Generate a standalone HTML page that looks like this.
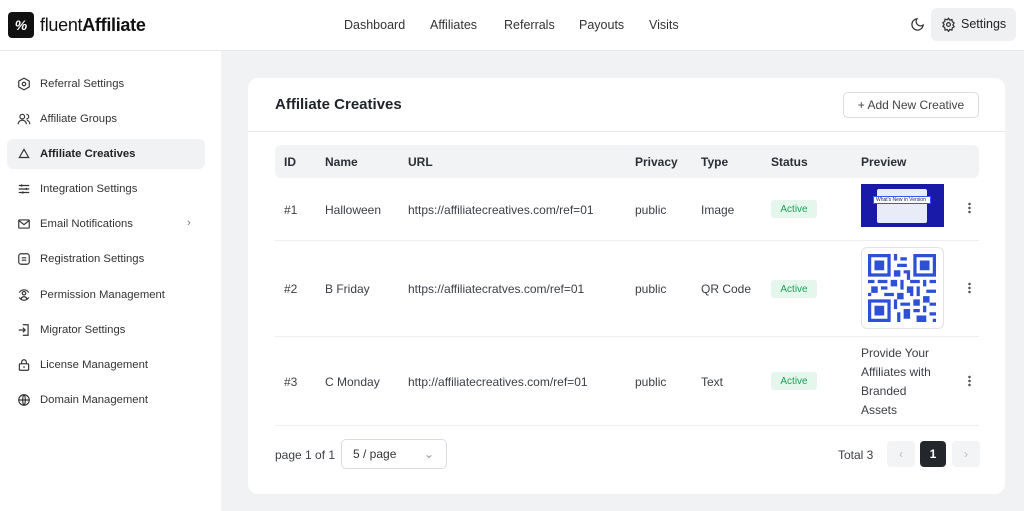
<!DOCTYPE html>
<html><head><meta charset="utf-8"><style>
*{box-sizing:border-box;margin:0;padding:0}
body{width:1024px;height:511px;overflow:hidden;font-family:"Liberation Sans",sans-serif;background:#f1f2f4;color:#2b2f36;font-size:12px;position:relative}
.hdr{position:absolute;left:0;top:0;width:1024px;height:51px;background:#fff;border-bottom:1px solid #e8e9ec}
.logo{position:absolute;left:8px;top:12px;width:26px;height:26px;background:#111;border-radius:4px;color:#fff;font-weight:bold;font-size:14px;text-align:center;line-height:26px;font-style:italic}
.brand{position:absolute;left:40px;top:15px;font-size:18px;color:#111;letter-spacing:-.3px}
.nav{position:absolute;top:18px;font-size:12.5px;color:#333}
.set{position:absolute;left:931px;top:8px;width:85px;height:33px;background:#eef0f2;border-radius:6px;font-size:12.5px;line-height:33px;padding-left:30px;color:#222}
.side{position:absolute;left:0;top:51px;width:221px;height:460px;background:#fff}
.si{position:absolute;left:40px;font-size:11.3px;color:#333;margin-top:1px}
.ic{position:absolute;left:17px;width:14px;height:14px}
.act{position:absolute;left:7px;top:139px;width:198px;height:30px;background:#f1f2f4;border-radius:6px}
.card{position:absolute;left:248px;top:78px;width:757px;height:416px;background:#fff;border-radius:10px}
.t{position:absolute;font-size:12px;color:#3a3e45}
.h{font-weight:bold;color:#2b2f36}
.th{position:absolute;left:275px;top:145px;width:704px;height:33px;background:#f2f3f5;border-radius:6px}
.line{position:absolute;left:275px;width:704px;height:1px;background:#eceef1}
.badge{position:absolute;left:771px;width:46px;height:18px;background:#e5f6ec;color:#1f9d55;font-size:10px;display:flex;align-items:center;justify-content:center;border-radius:3px}
.dots{position:absolute;left:968px;width:3px;height:12px;background:radial-gradient(circle,#555 1.2px,transparent 1.4px) 0 0/3px 4px}
</style></head><body>
<div class="hdr">
<div class="logo">%</div><div class="brand">fluent<b>Affiliate</b></div>
<div class="nav" style="left:344px">Dashboard</div>
<div class="nav" style="left:430px">Affiliates</div>
<div class="nav" style="left:504px">Referrals</div>
<div class="nav" style="left:579px">Payouts</div>
<div class="nav" style="left:649px">Visits</div>
<svg style="position:absolute;left:910px;top:17px" width="15" height="15" viewBox="0 0 24 24" fill="none" stroke="#333" stroke-width="2"><path d="M21 12.8A9 9 0 1 1 11.2 3a7 7 0 0 0 9.8 9.8z"/></svg>
<div class="set">Settings</div>
<svg style="position:absolute;left:941px;top:17px" width="15" height="15" viewBox="0 0 24 24" fill="none" stroke="#333" stroke-width="2"><circle cx="12" cy="12" r="3"/><path d="M12 2l2 3 3.5-1 .5 3.5 3 2-2 3 2 3-3 2-.5 3.5-3.5-1-2 3-2-3-3.5 1L6 17l-3-2 2-3-2-3 3-2 .5-3.5 3.5 1z"/></svg>
</div>
<div class="side"></div>
<div class="act"></div>
<svg class="ic" style="top:77px" viewBox="0 0 24 24" fill="none" stroke="#333" stroke-width="2"><path d="M12 2l9 5v10l-9 5-9-5V7z"/><circle cx="12" cy="12" r="3"/></svg><div class="si" style="top:77px">Referral Settings</div>
<svg class="ic" style="top:112px" viewBox="0 0 24 24" fill="none" stroke="#333" stroke-width="2"><circle cx="9" cy="8" r="4"/><path d="M2 21c0-4 3-7 7-7s7 3 7 7M16 4a4 4 0 0 1 0 8M22 21c0-3-2-6-5-7"/></svg><div class="si" style="top:112px">Affiliate Groups</div>
<svg class="ic" style="top:147px" viewBox="0 0 24 24" fill="none" stroke="#333" stroke-width="2"><path d="M4 18L12 4l8 14zM4 18h16"/></svg><div class="si" style="top:147px;font-weight:bold;color:#222">Affiliate Creatives</div>
<svg class="ic" style="top:182px" viewBox="0 0 24 24" fill="none" stroke="#333" stroke-width="2"><path d="M3 6h18M3 12h18M3 18h18M8 4v4M16 10v4M10 16v4"/></svg><div class="si" style="top:182px">Integration Settings</div>
<svg class="ic" style="top:217px" viewBox="0 0 24 24" fill="none" stroke="#333" stroke-width="2"><rect x="3" y="5" width="18" height="14" rx="1"/><path d="M3 6l9 7 9-7"/></svg><div class="si" style="top:217px">Email Notifications</div>
<div class="si" style="top:216px;left:187px;color:#777">›</div>
<svg class="ic" style="top:252px" viewBox="0 0 24 24" fill="none" stroke="#333" stroke-width="2"><rect x="3" y="3" width="18" height="18" rx="4"/><path d="M8 10h8M8 14h8"/></svg><div class="si" style="top:252px">Registration Settings</div>
<svg class="ic" style="top:288px" viewBox="0 0 24 24" fill="none" stroke="#333" stroke-width="2"><circle cx="12" cy="9" r="3"/><path d="M7 19c1-3 3-4 5-4s4 1 5 4M4 8a9 9 0 0 1 16 0M4 16a9 9 0 0 0 16 0"/></svg><div class="si" style="top:288px">Permission Management</div>
<svg class="ic" style="top:323px" viewBox="0 0 24 24" fill="none" stroke="#333" stroke-width="2"><path d="M10 3h9v18h-9M3 12h11M10 8l4 4-4 4"/></svg><div class="si" style="top:323px">Migrator Settings</div>
<svg class="ic" style="top:358px" viewBox="0 0 24 24" fill="none" stroke="#333" stroke-width="2"><rect x="4" y="10" width="16" height="11" rx="1"/><path d="M8 10V7a4 4 0 0 1 8 0v3M12 14v3"/></svg><div class="si" style="top:358px">License Management</div>
<svg class="ic" style="top:393px" viewBox="0 0 24 24" fill="none" stroke="#333" stroke-width="2"><circle cx="12" cy="12" r="9"/><path d="M3 12h18M12 3c3 3 3 15 0 18M12 3c-3 3-3 15 0 18"/></svg><div class="si" style="top:393px">Domain Management</div>

<div class="card"></div>
<div class="t" style="left:275px;top:96px;font-size:15px;font-weight:bold;color:#1f2329">Affiliate Creatives</div>
<div style="position:absolute;left:843px;top:92px;width:136px;height:26px;border:1px solid #d9dce1;border-radius:5px;font-size:12px;line-height:24px;text-align:center;color:#444">+ Add New Creative</div>
<div style="position:absolute;left:248px;top:131px;width:757px;height:1px;background:#e8e9ec"></div>
<div class="th"></div>
<div class="t h" style="left:284px;top:155px">ID</div>
<div class="t h" style="left:325px;top:155px">Name</div>
<div class="t h" style="left:408px;top:155px">URL</div>
<div class="t h" style="left:635px;top:155px">Privacy</div>
<div class="t h" style="left:701px;top:155px">Type</div>
<div class="t h" style="left:771px;top:155px">Status</div>
<div class="t h" style="left:861px;top:155px">Preview</div>

<div class="t" style="left:284px;top:203px">#1</div><div class="t" style="left:325px;top:203px">Halloween</div><div class="t" style="left:408px;top:203px">https://affiliatecreatives.com/ref=01</div><div class="t" style="left:635px;top:203px">public</div><div class="t" style="left:701px;top:203px">Image</div><div class="badge" style="top:200px">Active</div>
<div style="position:absolute;left:861px;top:184px;width:83px;height:43px;background:#1a1aa8"><div style="position:absolute;left:16px;top:5px;width:50px;height:34px;background:#e8ecf7;border-radius:2px"></div><div style="position:absolute;left:12px;top:12px;width:58px;height:8px;background:#fff;border:1px solid #35f;font-size:5px;color:#225;line-height:6px;padding-left:2px">What's New in Version</div></div>
<div class="dots" style="top:202px"></div>
<div class="line" style="top:240px"></div>

<div class="t" style="left:284px;top:282px">#2</div><div class="t" style="left:325px;top:282px">B Friday</div><div class="t" style="left:408px;top:282px">https://affiliatecratves.com/ref=01</div><div class="t" style="left:635px;top:282px">public</div><div class="t" style="left:701px;top:282px">QR Code</div><div class="badge" style="top:280px">Active</div>
<div style="position:absolute;left:861px;top:247px;width:83px;height:82px;border:1px solid #e2e4e8;border-radius:6px;background:#fff"></div>
<svg style="position:absolute;left:868px;top:254px" width="68" height="68" viewBox="0 0 21 21" fill="#2d50d6"><path d="M0 0h7v7H0zM1 1v5h5V1zM2 2h3v3H2zM14 0h7v7h-7zM15 1v5h5V1zM16 2h3v3h-3zM0 14h7v7H0zM1 15v5h5v-5zM2 16h3v3H2z" fill-rule="evenodd"/><path d="M8 0h1v2H8zM10 1h2v1h-2zM9 3h3v1H9zM8 5h2v2H8zM11 5h2v1h-2zM12 6h1v2h-1zM0 8h2v1H0zM3 8h3v1H3zM7 8h2v2H7zM10 8h1v3h-1zM13 8h3v1h-3zM17 8h1v2h-1zM19 8h2v1h-2zM1 10h2v2H1zM4 10h2v1H4zM12 10h2v2h-2zM15 10h1v3h-1zM18 11h3v1h-3zM0 12h1v1H0zM5 12h3v1H5zM9 12h2v2H9zM17 13h2v2h-2zM8 14h1v3H8zM10 15h3v1h-3zM14 14h2v2h-2zM19 15h2v1h-2zM11 17h2v3h-2zM14 17h2v1h-2zM9 18h1v3H9zM15 19h3v2h-3zM17 16h1v2h-1zM19 18h2v1h-2zM20 20h1v1h-1zM13 12h1v1h-1z"/></svg>
<div class="dots" style="top:282px"></div>
<div class="line" style="top:336px"></div>

<div class="t" style="left:284px;top:375px">#3</div><div class="t" style="left:325px;top:375px">C Monday</div><div class="t" style="left:408px;top:375px">http://affiliatecreatives.com/ref=01</div><div class="t" style="left:635px;top:375px">public</div><div class="t" style="left:701px;top:375px">Text</div><div class="badge" style="top:372px">Active</div>
<div class="t" style="left:861px;top:344px;line-height:19px">Provide Your<br>Affiliates with<br>Branded<br>Assets</div>
<div class="dots" style="top:375px"></div>
<div class="line" style="top:425px"></div>

<div class="t" style="left:275px;top:448px">page 1 of 1</div>
<div style="position:absolute;left:341px;top:439px;width:106px;height:30px;border:1px solid #d9dce1;border-radius:5px;font-size:12px;line-height:28px;padding-left:11px;color:#333">5 / page<span style="position:absolute;right:12px;color:#999">⌄</span></div>
<div class="t" style="left:838px;top:448px">Total 3</div>
<div style="position:absolute;left:887px;top:441px;width:28px;height:26px;background:#f3f4f6;border-radius:4px;color:#bbb;text-align:center;line-height:26px">‹</div>
<div style="position:absolute;left:920px;top:441px;width:26px;height:26px;background:#23262b;border-radius:4px;color:#fff;text-align:center;line-height:26px;font-weight:bold">1</div>
<div style="position:absolute;left:952px;top:441px;width:28px;height:26px;background:#f3f4f6;border-radius:4px;color:#bbb;text-align:center;line-height:26px">›</div>
</body></html>
